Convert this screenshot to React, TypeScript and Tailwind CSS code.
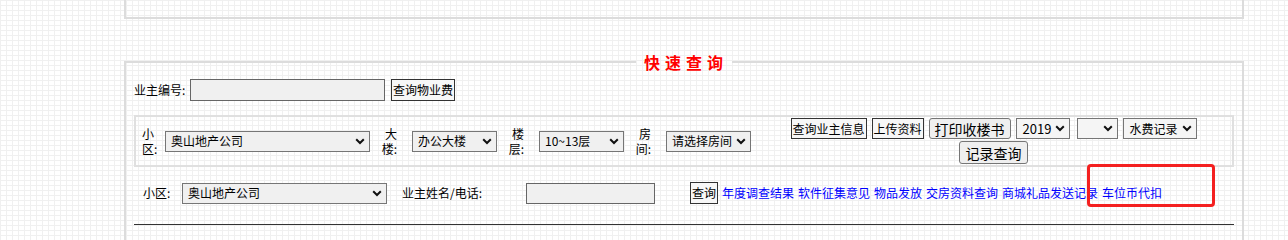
import React from "react";

const LINKS = ["年度调查结果", "软件征集意见", "物品发放", "交房资料查询", "商城礼品发送记录", "车位币代扣"];

function Chevron() {
  return (
    <svg width="10" height="7" viewBox="0 0 10 7" className="shrink-0">
      <path d="M1.2 1.2 5 5 8.8 1.2" fill="none" stroke="#111" strokeWidth="2" />
    </svg>
  );
}

function Select({ className, text, textClass = "text-[12px]" }: { className: string; text?: string; textClass?: string }) {
  return (
    <div className={"flex h-[21px] shrink-0 items-center justify-between gap-[4px] border border-[#767676] bg-[#f0f0f0] pr-[4px] pl-[5px] " + className}>
      <span className={"leading-none whitespace-nowrap text-black " + textClass}>{text}</span>
      <Chevron />
    </div>
  );
}

function PlainButton({ className, children }: { className: string; children: React.ReactNode }) {
  return (
    <button className={"flex h-[21px] shrink-0 items-center justify-center border border-[#333] bg-[#f7f7f7] text-[12px] leading-none whitespace-nowrap text-black " + className}>
      {children}
    </button>
  );
}

function RoundButton({ className, children }: { className: string; children: React.ReactNode }) {
  return (
    <button className={"flex shrink-0 items-center justify-center rounded-[3px] border border-[#767676] bg-[#efefef] text-[14px] leading-none whitespace-nowrap text-black " + className}>
      {children}
    </button>
  );
}

function TwoLine({ top, bottom, align }: { top: string; bottom: string; align: string }) {
  return (
    <div className={"flex shrink-0 flex-col text-[12px] leading-[15px] text-black " + align}>
      <span>{top}</span>
      <span>{bottom}</span>
    </div>
  );
}

export default function App() {
  return (
    <div className="relative h-[240px] overflow-hidden bg-white bg-[linear-gradient(to_right,#f0f0f0_1px,transparent_1px),linear-gradient(to_bottom,#f0f0f0_1px,transparent_1px)] bg-[size:6px_5px] font-['Noto_Sans_CJK_SC','Noto_Sans',sans-serif]">
      <div className="ml-[124px] w-[1120px]">
        <div className="h-[19px] border-x-2 border-b-2 border-[#dcdcdc]" />

        <fieldset className="mt-[31px] border-2 border-[#dcdcdc] px-[8px] pb-[40px]">
          <legend className="mx-auto px-[4px] pl-[8px] text-[16px] leading-[24px] font-bold tracking-[5px] text-[#ff0000]">
            快速查询
          </legend>

          {/* 业主编号 */}
          <div className="mt-[5px] flex h-[22px] items-center">
            <span className="w-[56px] text-[12px] leading-none text-black">业主编号:</span>
            <div className="h-[22px] w-[195px] border border-[#666] bg-[#f0f0f0]" />
            <PlainButton className="ml-[6px] h-[22px] w-[64px]">查询物业费</PlainButton>
          </div>

          {/* 楼盘选择 */}
          <div className="mt-[14px] flex h-[52px] border-2 border-[#e0e0e0]">
            <div className="flex items-center">
              <div className="ml-[6px] w-[16px]">
                <TwoLine top="小" bottom="区:" align="items-start" />
              </div>
              <Select className="ml-[7px] w-[205px]" text="奥山地产公司" />
              <div className="ml-[9px] w-[18px]">
                <TwoLine top="大" bottom="楼:" align="items-end" />
              </div>
              <Select className="ml-[15px] w-[85px]" text="办公大楼" />
              <div className="ml-[9px] w-[18px]">
                <TwoLine top="楼" bottom="层:" align="items-end" />
              </div>
              <Select className="ml-[15px] w-[85px]" text="10~13层" />
              <div className="ml-[9px] w-[18px]">
                <TwoLine top="房" bottom="间:" align="items-end" />
              </div>
              <Select className="ml-[15px] w-[85px]" text="请选择房间" />
            </div>

            <div className="ml-[4px] flex flex-1 flex-col items-center gap-[2px] pt-[1px]">
              <div className="flex h-[21px] items-center">
                <PlainButton className="w-[76px]">查询业主信息</PlainButton>
                <PlainButton className="ml-[5px] w-[52px]">上传资料</PlainButton>
                <RoundButton className="ml-[5px] h-[21px] w-[82px]">打印收楼书</RoundButton>
                <Select className="ml-[5px] w-[54px] bg-[#f5f5f5] pl-[6px]" text="2019" textClass="text-[13px]" />
                <Select className="ml-[7px] w-[41px] bg-[#f5f5f5]" />
                <Select className="ml-[5px] w-[74px] bg-[#f5f5f5] pl-[6px]" text="水费记录" textClass="text-[12px]" />
              </div>
              <RoundButton className="h-[23px] w-[69px]">记录查询</RoundButton>
            </div>
          </div>

          {/* 业主查询 */}
          <div className="mt-[15px] flex h-[22px] items-center text-[12px] leading-none whitespace-nowrap text-black">
            <span className="w-[48px] pl-[9px]">小区:</span>
            <Select className="w-[205px]" text="奥山地产公司" />
            <span className="ml-[15px] w-[124px]">业主姓名/电话:</span>
            <div className="h-[21px] w-[129px] border border-[#666] bg-[#f0f0f0]" />
            <PlainButton className="ml-[35px] h-[22px] w-[28px]">查询</PlainButton>
            <div className="ml-[4px] flex gap-[4px]">
              {LINKS.map((l) => (
                <a key={l} href="#" className="text-[12px] text-[#0000ff]">
                  {l}
                </a>
              ))}
            </div>
          </div>

          <div className="mt-[20px] h-px bg-[#333]" />
        </fieldset>
      </div>

      <div className="absolute top-[164px] left-[1087px] h-[43px] w-[128px] rounded-[4px] border-[3px] border-[#f42020]" />
    </div>
  );
}
